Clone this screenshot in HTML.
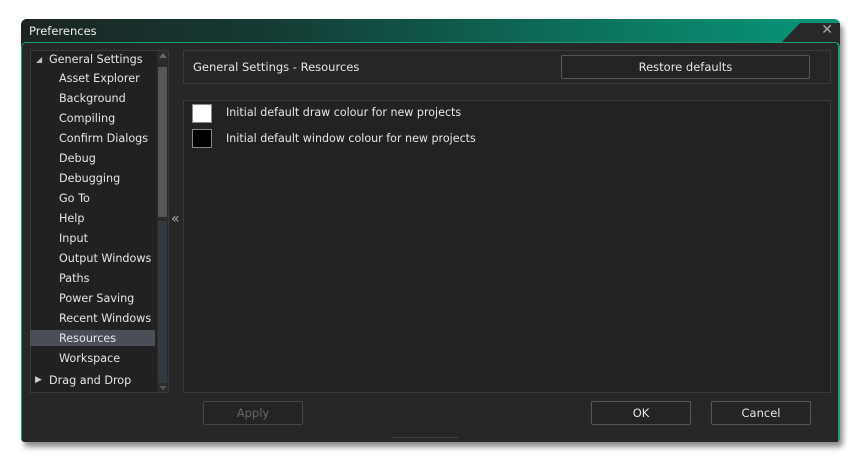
<!DOCTYPE html>
<html><head><style>
*{margin:0;padding:0;box-sizing:border-box}
body{width:860px;height:462px;background:#fff;position:relative;overflow:hidden;font-family:"DejaVu Sans","Liberation Sans",sans-serif;font-size:11.2px;color:#e6e6e6}
.win{position:absolute;left:21px;top:19px;width:819px;height:423px;background:#272727;border-radius:6px 6px 4px 4px;box-shadow:3px 5px 6px rgba(0,0,0,.45);overflow:hidden}
.title{position:absolute;left:0;top:0;width:819px;height:23px;background:linear-gradient(90deg,#1c2422 0%,#143a33 30%,#0d6c58 65%,#06987a 100%)}
.title span{position:absolute;left:8px;top:5px;font-size:11.5px;color:#eee}
.notch{position:absolute;right:0;top:4px;width:58px;height:19px;background:#282828;clip-path:polygon(18px 0,100% 0,100% 100%,0 100%)}
.x{position:absolute;right:7px;top:3px;color:#aaa;font-size:14px}
.body{position:absolute;left:0;top:23px;width:819px;height:400px;border:1px solid #1a9c78;border-bottom:none;border-right-width:2px;border-radius:5px 5px 0 0;background:#272727}
.p{position:absolute;background:#222;border:1px solid #3a3a3a}
.tree div{position:absolute;left:29px;white-space:nowrap;font-size:11.2px}
.btn{position:absolute;border:1px solid #555;border-radius:2px;background:#242424;text-align:center;line-height:22px;font-size:11.5px}
.sw{position:absolute;left:192px;width:20px;height:19px;border:1px solid #888}
</style></head><body>
<div class="win">
<div class="title"><span>Preferences</span><div class="notch"></div><div class="x">✕</div></div>
<div class="body"></div>
</div>
<div class="p" style="left:30px;top:50px;width:139px;height:343px;background:#212121"></div>
<div style="position:absolute;left:30px;top:330px;width:125px;height:16px;background:#4a4f57"></div>
<div style="position:absolute;left:157px;top:51px;width:11px;height:341px;background:#2b2b2b"></div>
<div style="position:absolute;left:158px;top:67px;width:9px;height:150px;background:#575757"></div>
<div style="position:absolute;left:158px;top:221px;width:9px;height:162px;background:#333a3e"></div>
<div style="position:absolute;left:159px;top:53px;width:0;height:0;border-left:4px solid transparent;border-right:4px solid transparent;border-bottom:5px solid #666"></div>
<div style="position:absolute;left:159px;top:386px;width:0;height:0;border-left:4px solid transparent;border-right:4px solid transparent;border-top:4px solid #555"></div>
<div class="tree" style="position:absolute;left:0;top:1px">
<div style="left:36px;top:54px;font-size:8px;color:#bbb">◢</div>
<div style="left:49px;top:52px">General Settings</div>
<div style="left:59px;top:71px">Asset Explorer</div>
<div style="left:59px;top:91px">Background</div>
<div style="left:59px;top:111px">Compiling</div>
<div style="left:59px;top:131px">Confirm Dialogs</div>
<div style="left:59px;top:151px">Debug</div>
<div style="left:59px;top:171px">Debugging</div>
<div style="left:59px;top:191px">Go To</div>
<div style="left:59px;top:211px">Help</div>
<div style="left:59px;top:231px">Input</div>
<div style="left:59px;top:251px">Output Windows</div>
<div style="left:59px;top:271px">Paths</div>
<div style="left:59px;top:291px">Power Saving</div>
<div style="left:59px;top:311px">Recent Windows</div>
<div style="left:59px;top:331px">Resources</div>
<div style="left:59px;top:351px">Workspace</div>
<div style="left:35px;top:374px;font-size:9px;color:#ccc">▶</div>
<div style="left:49px;top:373px">Drag and Drop</div>
</div>
<div style="position:absolute;left:171px;top:211px;color:#aaa;font-size:14px">«</div>
<div class="p" style="left:183px;top:50px;width:648px;height:34px;background:#262626"></div>
<div style="position:absolute;left:193px;top:60px;font-size:11.5px">General Settings - Resources</div>
<div class="btn" style="left:561px;top:55px;width:249px;height:24px">Restore defaults</div>
<div class="p" style="left:183px;top:100px;width:648px;height:293px"></div>
<div class="sw" style="top:104px;background:#fff"></div>
<div class="sw" style="top:129px;background:#000"></div>
<div style="position:absolute;left:226px;top:106px;font-size:11.1px">Initial default draw colour for new projects</div>
<div style="position:absolute;left:226px;top:132px;font-size:11.1px">Initial default window colour for new projects</div>
<div class="btn" style="left:203px;top:401px;width:100px;height:24px;color:#666;border-color:#444">Apply</div>
<div class="btn" style="left:591px;top:401px;width:100px;height:24px">OK</div>
<div class="btn" style="left:711px;top:401px;width:100px;height:24px">Cancel</div>
<div style="position:absolute;left:393px;top:437px;width:64px;height:2px;border-top:1px dotted #555"></div>
</body></html>
